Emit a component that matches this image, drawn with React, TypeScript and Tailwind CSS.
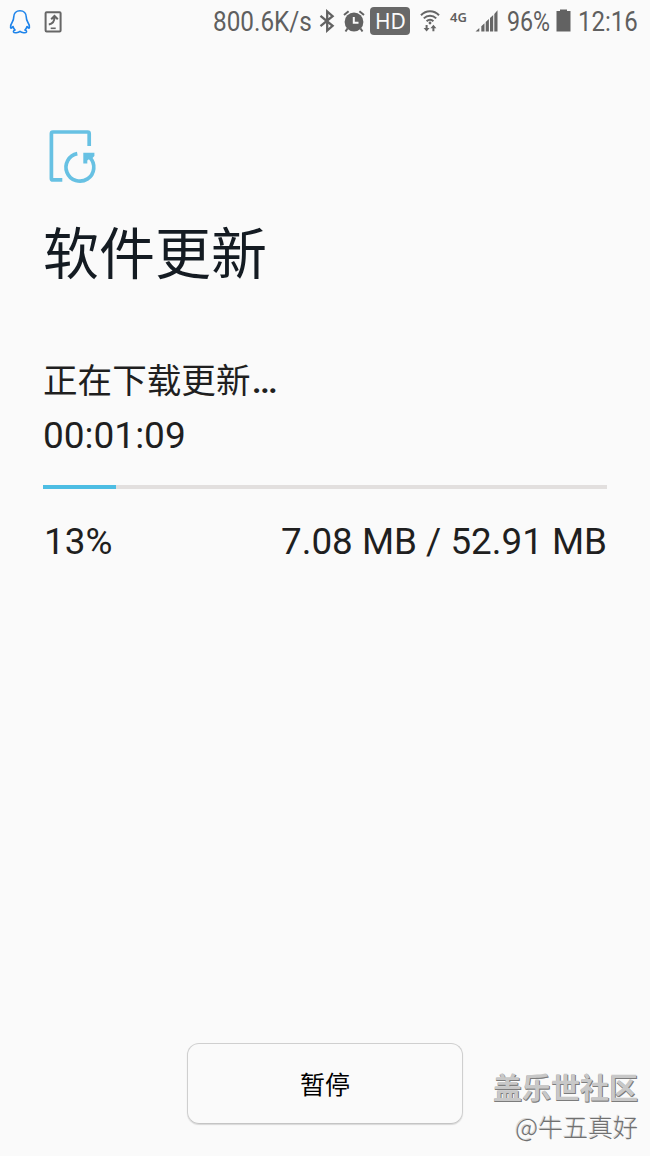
import React from 'react';

const progress = { percent: 13, done: '7.08 MB', total: '52.91 MB' };

const QQIcon = () => (
  <svg width="22" height="26" viewBox="0 0 22 26" fill="none" stroke="#1d83ea" strokeWidth="1.6" strokeLinejoin="round">
    <path d="M11 1.8C7.2 1.8 4.7 4.5 4.7 8.3c0 2-.4 3.2-1.4 4.7-1.2 1.9-2 3.8-1.7 5.5.2 1 1.2.7 2.4-1 .4 1.4 1.1 2.6 2.1 3.5-1.5.6-1.9 1.4-1.5 2.2.5.9 4.5.8 6.4-.8 1.9 1.6 5.9 1.7 6.4.8.4-.8 0-1.6-1.5-2.2 1-.9 1.7-2.1 2.1-3.5 1.2 1.7 2.2 2 2.4 1 .3-1.7-.5-3.6-1.7-5.5-1-1.5-1.4-2.7-1.4-4.7 0-3.8-2.5-6.5-6.3-6.5z" />
  </svg>
);

const TransferIcon = () => (
  <svg width="18" height="22" viewBox="0 0 18 22" fill="none" stroke="#666" strokeWidth="2">
    <rect x="1.6" y="1.3" width="15" height="19.2" rx="1" />
    <path d="M4.8 13.4C8.4 12.9 10.5 10.8 10.5 6M7.2 8.3 10.500 5 13.800 8.300" />
    <path d="M6.700 17.300h5" strokeWidth="1.600" />
  </svg>
);

const BluetoothIcon = () => (
  <svg width="16" height="24" viewBox="0 0 16 24" fill="none" stroke="#626262" strokeWidth="2.300">
    <path d="M1.500 6.800 13.600 16.800 8.200 21.500V2.500l5.400 4.700L1.500 17.200" />
  </svg>
);

const AlarmIcon = () => (
  <svg width="22" height="24" viewBox="0 0 22 24">
    <circle cx="11" cy="13" r="9.400" fill="#626262" />
    <path d="M1 6 5.600 2.200M21 6 16.400 2.200M4.500 19.500 2.500 22.500M17.500 19.500l2 3" stroke="#626262" strokeWidth="2" fill="none" />
    <path d="M10.800 8v5.800h4.700" stroke="#fafafa" strokeWidth="2" fill="none" />
  </svg>
);

const WifiIcon = () => (
  <svg width="20" height="24" viewBox="0 0 20 24" fill="none" stroke="#666" strokeWidth="2">
    <path d="M1 6.200C6 .8 14 .8 19 6.200M3.800 9.400c3.500-3.700 8.900-3.700 12.400 0M6.600 12.300c2-2 4.800-2 6.800 0" />
    <circle cx="10" cy="14" r="1.400" fill="#666" stroke="none" />
    <path d="M6.600 16v4M13.400 22.300v-4" />
    <path d="M3.600 18.900h6L6.600 22.500zM10.400 19.300h6l-3-3.500z" fill="#666" stroke="none" />
  </svg>
);

const SignalIcon = () => (
  <svg width="23" height="23" viewBox="0 0 23 23" fill="#666">
    <path d="M.500 22.500 4.300 19v3.500zM6.300 17.300l3.200-3v8.200H6.300zM10.700 13l3.200-3v12.500h-3.200zM15 8.900l3.200-3v16.600H15zM19.300 4.900 22.500 1.300v21.200h-3.200z" />
  </svg>
);

const BatteryIcon = () => (
  <svg width="15" height="23" viewBox="0 0 15 23" fill="#626262">
    <path d="M4 .5h7V2h3.500v20.500H.500V2H4z" />
  </svg>
);

const UpdateIcon = () => (
  <svg width="50" height="56" viewBox="0 0 50 56" fill="none" stroke="#67c1e3" strokeWidth="3.700">
    <path d="M41.200 17V4.500Q41.200 3 39.700 3H4.900Q3.400 3 3.400 4.500V49.400Q3.400 50.900 4.900 50.900H14.300" />
    <path d="M29.300 24.600A13.900 13.900 0 1 0 41.800 28.500" />
    <path d="M35.300 23.700H46.400V27L43.300 30.200 41.500 29.800 39.300 31.500V34.600H35.300z" fill="#67c1e3" stroke="none" />
  </svg>
);

const StatusBar: React.FC = () => (
  <header className="flex h-11 w-full items-center text-[27px] leading-[44px] text-[#5f5f5f]">
    <div className="flex items-center gap-[13px] pl-[9px]">
      <QQIcon />
      <TransferIcon />
    </div>
    <div className="ml-auto flex items-center pr-[12px]">
      <div className="w-[99px]">
        <span className="inline-block origin-left scale-x-[0.9] whitespace-nowrap">800.6K/s</span>
      </div>
      <div className="mb-[2px] ml-[7px]"><BluetoothIcon /></div>
      <div className="mb-[2px] ml-[8px]"><AlarmIcon /></div>
      <div className="mb-[2px] ml-[5px] flex h-[28px] w-[40px] items-center justify-center rounded bg-[#686868] pl-px font-['Noto_Sans'] text-[21px] leading-none text-[#fafafa]">HD</div>
      <div className="mb-[2px] ml-[10px]"><WifiIcon /></div>
      <div className="mb-[9px] ml-[10px] w-[18px] font-['Noto_Sans'] text-[13px] font-semibold leading-none">4G</div>
      <div className="mb-[3px] ml-[7px]"><SignalIcon /></div>
      <div className="ml-[9px] w-[44px]">
        <span className="inline-block origin-left scale-x-[0.86] whitespace-nowrap">96%</span>
      </div>
      <div className="mb-[3px] ml-[5px]"><BatteryIcon /></div>
      <div className="ml-[7px] w-[60px]">
        <span className="inline-block origin-left scale-x-[0.89] whitespace-nowrap">12:16</span>
      </div>
    </div>
  </header>
);

const App: React.FC = () => {
  return (
    <div className="flex h-[1156px] w-[650px] flex-col overflow-hidden bg-[#fafafa] font-[Roboto,'Noto_Sans_CJK_SC',sans-serif] text-[#1f1f1f]">
      <StatusBar />

      <main className="flex flex-col px-[43px] pt-[85px]">
        <div className="ml-[5px]"><UpdateIcon /></div>
        <h1 className="mt-[34px] h-[72px] text-[56px] leading-[72px] text-[#141b22]">软件更新</h1>
        <p className="mt-[68px] h-[44px] text-[34.600px] leading-[44px]">
          正在下载更新<span className="ml-px text-[37px] font-medium leading-none">…</span>
        </p>
        <p className="mt-[11px] h-[44px] text-[37px] leading-[44px]">00:01:09</p>

        <div className="mt-[27px] h-[4px] w-full bg-[#e2dfde]">
          <div className="h-full bg-[#4dbde3]" style={{ width: `${progress.percent}%` }} />
        </div>

        <div className="mt-[31px] flex justify-between pl-px text-[36.800px] leading-[44px]">
          <span>{progress.percent}%</span>
          <span>{progress.done} / {progress.total}</span>
        </div>
      </main>

      <footer className="mt-auto grid h-[113px] grid-cols-[187px_276px_1fr] items-start">
        <button className="col-start-2 h-[81px] rounded-xl border border-[#cfcfcf] border-b-[#c4c4c4] pt-[4px] text-[25px] text-black shadow-[0_1px_1px_#d8d8d8]">
          暂停
        </button>
        <div className="flex flex-col items-end pr-[12px] pt-[23px] font-['Noto_Sans_CJK_SC',sans-serif] whitespace-nowrap">
          <div className="text-[29px] font-bold leading-[40px] text-[#c8c8c8] [text-shadow:1px_1px_0_#7c7c7c,0_1px_0_#7c7c7c]">盖乐世社区</div>
          <div className="mt-px text-[25px] font-light leading-[38px] text-[#707070] [text-shadow:-1px_-1px_0_#d8d8d8]">@牛五真好</div>
        </div>
      </footer>
    </div>
  );
};

export default App;
